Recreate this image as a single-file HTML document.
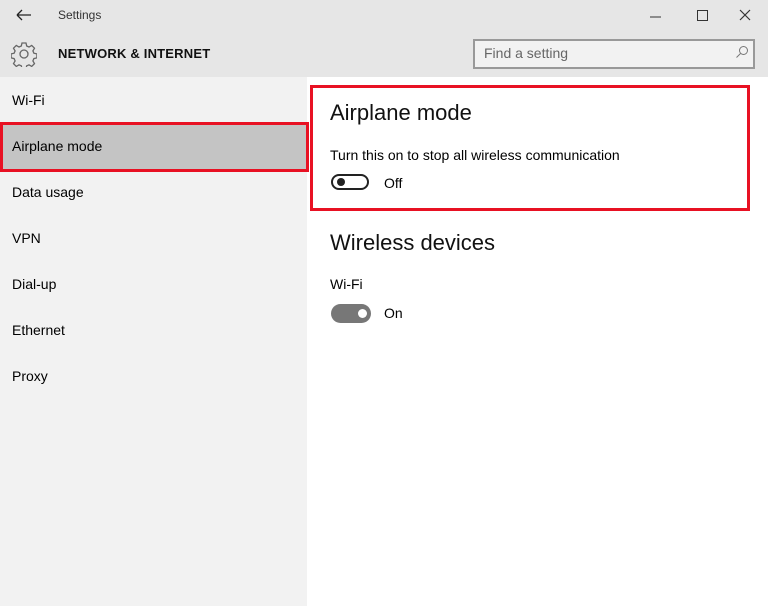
<!DOCTYPE html>
<html><head><style>
body{margin:0;width:768px;height:606px;position:relative;font-family:"Liberation Sans",sans-serif;background:#fff;overflow:hidden;color:#000}
.a{position:absolute}
</style></head><body>
<div class="a" style="left:0;top:0;width:768px;height:77px;background:#e6e6e6"></div>
<div class="a" style="left:0;top:77px;width:307px;height:529px;background:#f2f2f2"></div>
<svg class="a" style="left:15px;top:8px" width="18" height="14"><path d="M2 7H16M2 7L7 2M2 7L7 12" stroke="#222" stroke-width="1.3" fill="none"/></svg>
<div class="a" style="left:58px;top:8px;font-size:12px;color:#333">Settings</div>
<svg class="a" style="left:650px;top:8px" width="110" height="16"><path d="M0 9H11" stroke="#333"/><rect x="47.5" y="2.5" width="10" height="10" fill="none" stroke="#333"/><path d="M90 2L100 12M100 2L90 12" stroke="#333" stroke-width="1.2"/></svg>
<svg class="a" style="left:11px;top:41px" width="26" height="26" viewBox="0 0 26 26"><g fill="none" stroke="#666" stroke-width="1.3"><circle cx="13" cy="13" r="4"/><path d="M11 2h4l.7 3 2.3 1 2.7-1.6 2.8 2.8-1.6 2.7 1 2.3 3 .7v4l-3 .7-1 2.3 1.6 2.7-2.8 2.8-2.7-1.6-2.3 1-.7 3h-4l-.7-3-2.3-1-2.7 1.6-2.8-2.8 1.6-2.7-1-2.3-3-.7v-4l3-.7 1-2.3-1.6-2.7 2.8-2.8 2.7 1.6 2.3-1z"/></g></svg>
<div class="a" style="left:58px;top:46px;font-size:13px;font-weight:bold;color:#111;letter-spacing:0.2px">NETWORK &amp; INTERNET</div>
<div class="a" style="left:473px;top:39px;width:278px;height:26px;border:2px solid #999;background:#f2f2f2"></div>
<div class="a" style="left:484px;top:45px;font-size:14px;color:#666">Find a setting</div>
<svg class="a" style="left:735px;top:45px" width="14" height="14"><circle cx="8.5" cy="5.5" r="4" fill="none" stroke="#777"/><path d="M5.5 8.5L1.5 12.5" stroke="#777"/></svg>
<div class="a" style="left:12px;top:92px;font-size:14px">Wi-Fi</div>
<div class="a" style="left:0;top:122px;width:303px;height:44px;background:#c4c4c4;border:3px solid #e81123"></div>
<div class="a" style="left:12px;top:138px;font-size:14px">Airplane mode</div>
<div class="a" style="left:12px;top:184px;font-size:14px">Data usage</div>
<div class="a" style="left:12px;top:230px;font-size:14px">VPN</div>
<div class="a" style="left:12px;top:276px;font-size:14px">Dial-up</div>
<div class="a" style="left:12px;top:322px;font-size:14px">Ethernet</div>
<div class="a" style="left:12px;top:368px;font-size:14px">Proxy</div>
<div class="a" style="left:310px;top:85px;width:434px;height:120px;border:3px solid #e81123"></div>
<div class="a" style="left:330px;top:100px;font-size:22px;color:#111">Airplane mode</div>
<div class="a" style="left:330px;top:147px;font-size:14px">Turn this on to stop all wireless communication</div>
<div class="a" style="left:331px;top:174px;width:38px;height:16px;border:2px solid #222;border-radius:10px;box-sizing:border-box"></div>
<div class="a" style="left:337px;top:178px;width:8px;height:8px;border-radius:50%;background:#222"></div>
<div class="a" style="left:384px;top:175px;font-size:14px">Off</div>
<div class="a" style="left:330px;top:230px;font-size:22px;color:#111">Wireless devices</div>
<div class="a" style="left:330px;top:276px;font-size:14px">Wi-Fi</div>
<div class="a" style="left:331px;top:304px;width:40px;height:19px;border-radius:10px;background:#777"></div>
<div class="a" style="left:358px;top:309px;width:9px;height:9px;border-radius:50%;background:#fff"></div>
<div class="a" style="left:384px;top:305px;font-size:14px">On</div>
</body></html>
